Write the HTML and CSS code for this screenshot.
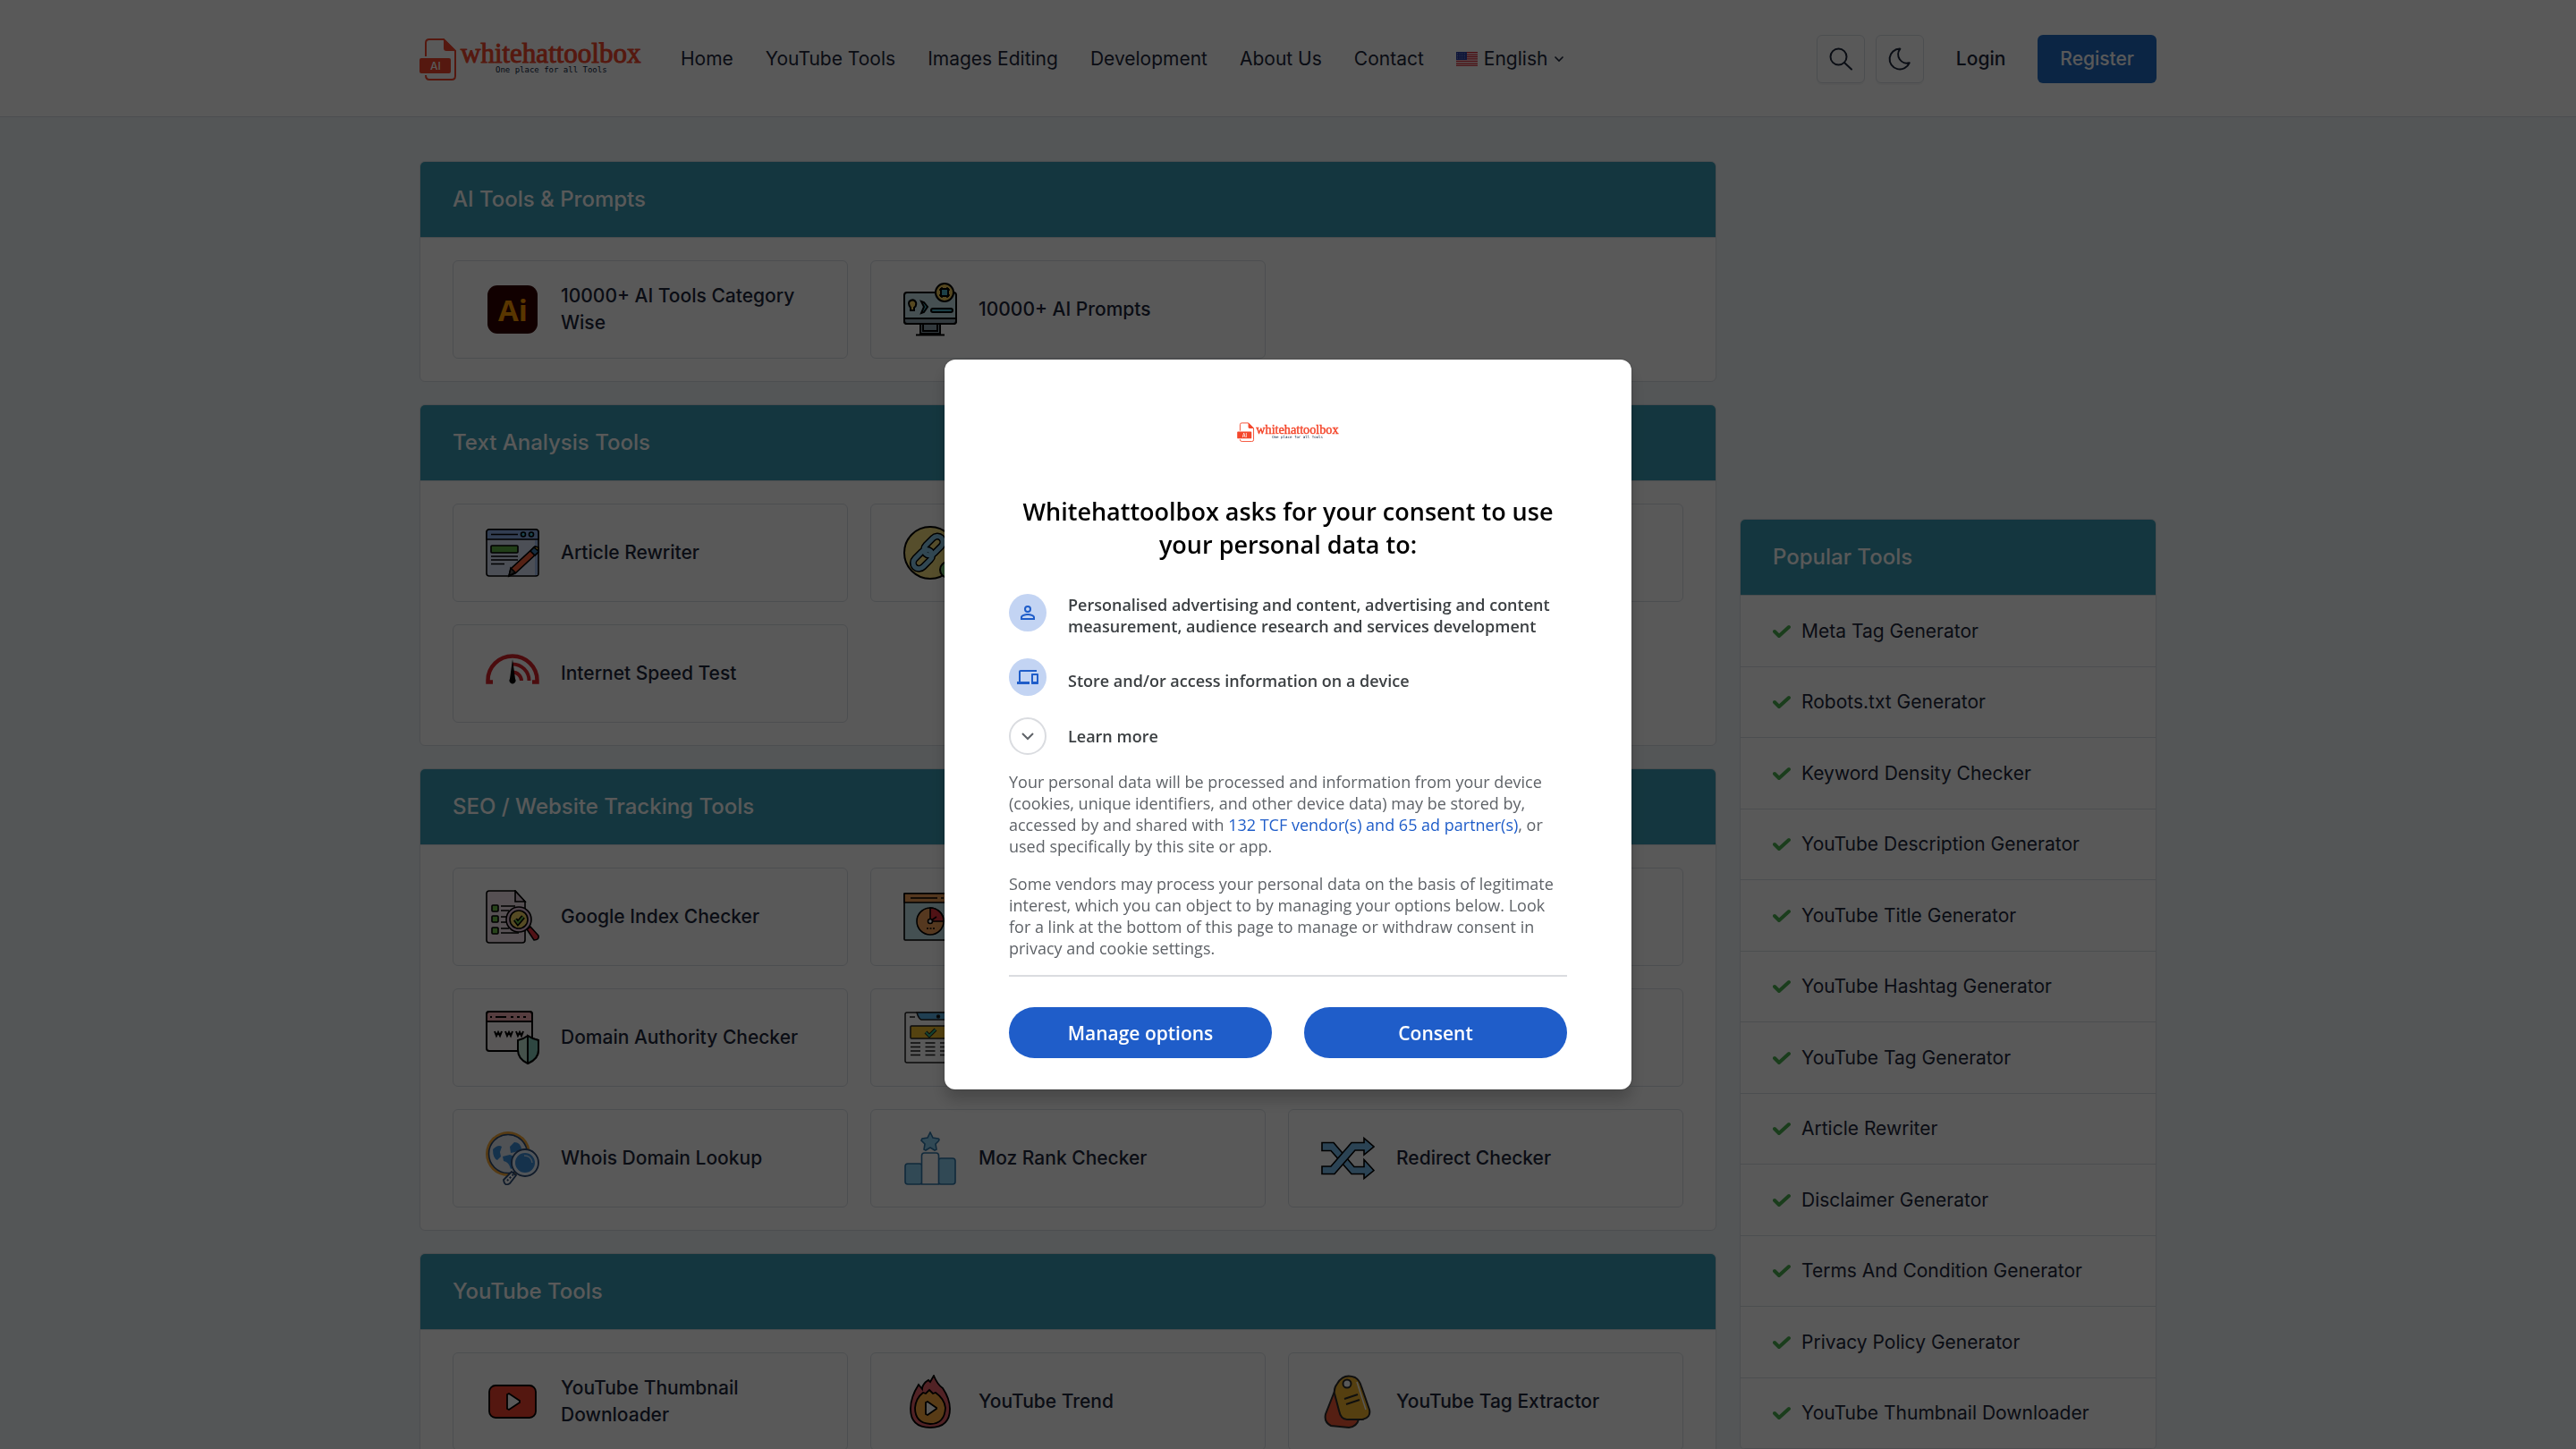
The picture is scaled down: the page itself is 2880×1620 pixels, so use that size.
FILE: index.html
```html
<!DOCTYPE html>
<html lang="en">
<head>
<meta charset="utf-8">
<title>Whitehattoolbox - One place for all Tools</title>
<link rel="stylesheet" href="styles.css">
</head>
<body>
<svg class="sprite" aria-hidden="true">
  <symbol id="logo" viewBox="0 0 250 48">
    <path d="M7 21V6q0-4 4-4h16l13 13v28q0 4-4 4H11q-4 0-4-5" fill="none" stroke="#f4472c" stroke-width="2"/>
    <path d="M27 1l14 14H30q-3 0-3-3z" fill="#f4472c"/>
    <rect x="0" y="23" width="35" height="17" rx="2" fill="#f4472c"/>
    <text x="12" y="36" class="logo-ai">AI</text>
    <text x="46" y="28" class="logo-name">whitehattoolbox</text>
    <text x="85" y="39" class="logo-tag">One place for all Tools</text>
  </symbol>
  <symbol id="tick" viewBox="0 0 20 16">
    <path d="M2 8l5 5L18 3" fill="none" stroke="#4caf50" stroke-width="4" stroke-linecap="round" stroke-linejoin="round"/>
  </symbol>
</svg>

<header class="topbar">
  <div class="container topbar-row">
    <a class="brand" href="#" aria-label="whitehattoolbox"><svg class="brand-logo"><use href="#logo"/></svg></a>
    <nav class="menu">
      <a href="#">Home</a>
      <a href="#">YouTube Tools</a>
      <a href="#">Images Editing</a>
      <a href="#">Development</a>
      <a href="#">About Us</a>
      <a href="#">Contact</a>
      <a href="#" class="language">
        <svg width="24" height="16" viewBox="0 0 24 16"><path fill="#fff" d="M0 0h24v16H0z"/><path stroke="#d8222f" stroke-width="1.3" d="M0 .7h24M0 3.1h24M0 5.5h24M0 7.9h24M0 10.3h24M0 12.8h24M0 15.2h24"/><path fill="#2e42a5" d="M0 0h12v9H0z"/><path stroke="#9aa5dd" stroke-dasharray="1 1.6" d="M1 2h10M1 4.500h10M1 7h10"/></svg>
        English
        <svg width="12" height="8" viewBox="0 0 12 8"><path d="M1.500 1.500 6 6l4.500-4.500" fill="none" stroke="#1d273b" stroke-width="1.600"/></svg>
      </a>
    </nav>
    <div class="actions">
      <button class="icon-button" type="button" aria-label="Search"><svg width="28" height="28" viewBox="0 0 28 28"><g fill="none" stroke="#1d273b" stroke-width="2" stroke-linecap="round"><circle cx="11.500" cy="11.500" r="9"/><path d="m18 18 8 7.500"/></g></svg></button>
      <button class="icon-button" type="button" aria-label="Dark mode"><svg width="28" height="28" viewBox="0 0 28 28"><path d="M14 2.500c-1.300 0 0 0 .4.100a9.800 9.800 0 0 0 10.400 15.600A11.500 11.500 0 1 1 14 2.500z" fill="none" stroke="#1d273b" stroke-width="2" stroke-linejoin="round"/></svg></button>
      <a class="login" href="#">Login</a>
      <a class="register" href="#">Register</a>
    </div>
  </div>
</header>

<main class="container layout">
  <div class="sections">
    <section class="card">
      <h2 class="card-title">AI Tools &amp; Prompts</h2>
      <div class="tools">
        <a class="tool" href="#">
          <svg class="tool-icon" viewBox="0 0 60 60"><rect x="2" y="3" width="56" height="54" rx="11" fill="#330000"/><text x="14" y="43" class="ai-badge">Ai</text></svg>
          <span>10000+ AI Tools Category Wise</span>
        </a>
        <a class="tool" href="#">
          <svg class="tool-icon" viewBox="0 0 60 60" stroke="#000" stroke-width="2"><path d="M19 45h22v12H19z" fill="#8fa3b0"/><path d="M14 58.500h32M22 45v9h16v-9" fill="none"/><rect x="1" y="11" width="58" height="35" rx="3" fill="#c8e4ea"/><path d="M1 40h58v3q0 3-3 3H4q-3 0-3-3z" fill="#8fa3b0"/><path d="M8 31v-3q-4-6 0-8 4-2 6 2 1 4-2 6v3z" fill="#f5cf5c"/><path d="m20 21 3 1 4 5-4 6-3 1 3-7z" fill="#4fb4c8"/><rect x="31" y="29" width="24" height="4" rx="2" fill="#4fb4c8"/><circle cx="46" cy="11" r="10" fill="#f5cf5c"/><path d="M40 8h12M40 14h12M43 5v12M49 5v12" stroke-width="1.500"/><rect x="42" y="7" width="8" height="8" fill="#4fb4c8"/></svg>
          <span>10000+ AI Prompts</span>
        </a>
      </div>
    </section>

    <section class="card">
      <h2 class="card-title">Text Analysis Tools</h2>
      <div class="tools">
        <a class="tool" href="#">
          <svg class="tool-icon" viewBox="0 0 60 60" stroke="#000" stroke-width="1.600"><rect x="1" y="4" width="58" height="52" rx="3" fill="#d9e2f7"/><path d="M1 15V7q0-3 3-3h52q3 0 3 3v8z" fill="#8fb2ea"/><path d="M55 16h3v39h-3z" fill="#a9c4f0" stroke="none"/><path d="M6 9.500h30M6 34h30M6 38h30M6 42.500h15" fill="none"/><circle cx="42" cy="9.500" r="2.500" fill="#4ec3e0"/><circle cx="51" cy="9.500" r="2.500" fill="#4ec3e0"/><rect x="6" y="22" width="30" height="8" rx="1" fill="#5fb246"/><path d="m54 24 5 2v3L33 53l-7 3 2-8z" fill="#f2603a"/><path d="m28 47 5 5-7 4z" fill="#555"/><path d="m50 28 5 5 4-4v-3l-4-3z" fill="#3d7fb5"/><path d="m54 24 2-1 3 1v4z" fill="#f5c842"/></svg>
          <span>Article Rewriter</span>
        </a>
        <a class="tool" href="#" aria-label="Text tool">
          <svg class="tool-icon" viewBox="0 0 60 60" fill="none"><circle cx="30" cy="30" r="29" fill="#f5e07e" stroke="#000" stroke-width="2"/><g transform="rotate(-45 28 30)" stroke="#000" stroke-width="8"><rect x="6" y="24" width="25" height="13" rx="7"/><rect x="25" y="22" width="25" height="13" rx="7"/><g stroke="#8ccbea" stroke-width="5"><rect x="6" y="24" width="25" height="13" rx="7"/><rect x="25" y="22" width="25" height="13" rx="7"/></g></g><circle cx="50" cy="49" r="9" fill="#7bd17b" stroke="#000" stroke-width="2"/></svg>
        </a>
        <a class="tool" href="#" aria-label="Text tool"></a>
        <a class="tool" href="#">
          <svg class="tool-icon" viewBox="0 0 60 60" fill="none" stroke="#d8232a"><path d="M8 39.500H2.500v-2a27.500 27 0 0 1 55 0v2H52" stroke-width="4.500"/><path d="M30 19.500a18.500 18.500 0 0 1 18.500 18.500M30 28.500a10 10 0 0 1 10 9.500" stroke-width="4"/><path d="M30 14l-3 22a3.500 3.500 0 1 0 6 0z" fill="#000" stroke="none"/></svg>
          <span>Internet Speed Test</span>
        </a>
      </div>
    </section>

    <section class="card">
      <h2 class="card-title">SEO / Website Tracking Tools</h2>
      <div class="tools">
        <a class="tool" href="#">
          <svg class="tool-icon" viewBox="0 0 60 60" stroke="#000" stroke-width="1.600"><path d="M4 1h29l11 12v43q0 3-3 3H4q-3 0-3-3V4q0-3 3-3z" fill="#f6e6ee"/><path d="M33 1v12h11z" fill="#e0c9d6"/><g fill="#6fbf4a"><rect x="7" y="17" width="7" height="7" rx="1"/><rect x="7" y="29" width="7" height="7" rx="1"/><rect x="7" y="42" width="7" height="7" rx="1"/></g><path d="M17 18h16M17 23h9M17 30h6M17 36h6M17 43h9M17 48h20"/><path d="m46 44 4-3 9 10q1 5-5 5z" fill="#e8343f"/><circle cx="37" cy="33" r="14" fill="#e6c3da"/><circle cx="37" cy="33" r="10" fill="#f7d768"/><path d="m33 33 3 4 6-7" fill="none" stroke-width="5"/><path d="m33 33 3 4 6-7" fill="none" stroke="#6fbf4a" stroke-width="2"/></svg>
          <span>Google Index Checker</span>
        </a>
        <a class="tool" href="#" aria-label="Website tool">
          <svg class="tool-icon" viewBox="0 0 60 60" stroke="#000" stroke-width="1.600"><rect x="1" y="4" width="58" height="52" rx="1" fill="#c4e6ec"/><path d="M1 4h58v10H1z" fill="#f4a25a"/><path d="M8 9h30M42 9h3"/><circle cx="30" cy="35" r="15" fill="#f4a25a"/><path d="M30 35V20a15 15 0 0 1 15 15z" fill="#e8343f"/><path d="m30 35 7-5"/><circle cx="30" cy="35" r="2.500" fill="#fff"/><path d="M26 43h9" stroke-dasharray="2 1.500"/></svg>
        </a>
        <a class="tool" href="#" aria-label="Website tool"></a>
        <a class="tool" href="#">
          <svg class="tool-icon" viewBox="0 0 60 60" stroke="#000" stroke-width="2"><rect x="1" y="1" width="51" height="44" rx="3" fill="#fff8f8"/><path d="M1 12V4q0-3 3-3h45q3 0 3 3v8z" fill="#f5aeb4"/><path d="M5 7h2M11 7h12M28 7h3M35 7h3M42 7h3"/><path d="m10 23 2 5 2-4 2 4 2-5M22 23l2 5 2-4 2 4 2-5M34 23l2 5 2-4 2 4 2-5" fill="none"/><path d="M47 28q6 4 12 5v11q0 10-12 15-11-5-11-15V33q6-1 11-5z" fill="#c5ead8"/><path d="M47 28q6 4 12 5v11q0 10-12 15z" fill="#83cbb9"/></svg>
          <span>Domain Authority Checker</span>
        </a>
        <a class="tool" href="#" aria-label="Website tool">
          <svg class="tool-icon" viewBox="0 0 60 60" stroke="#222" stroke-width="1.500"><rect x="2" y="2" width="56" height="56" rx="2" fill="#fff"/><path d="M15 2h43v8H20q-3-1-5-8z" fill="#5db5ea"/><circle cx="39" cy="6.500" r="1.500"/><path d="M7 7h6"/><rect x="8" y="17" width="44" height="14" rx="1" fill="#f3bf2e"/><path d="m25 24 4 4 7-7" fill="none" stroke-width="4"/><path d="m25 24 4 4 7-7" fill="none" stroke="#3cc08c" stroke-width="2"/><path d="M8 36h44M8 40.500h44M8 45h44M8 49.500h44" stroke-dasharray="11 5.500"/></svg>
        </a>
        <a class="tool" href="#" aria-label="Website tool"></a>
        <a class="tool" href="#">
          <svg class="tool-icon" viewBox="0 0 60 60"><circle cx="25" cy="25" r="25" fill="#f5a93b"/><circle cx="25" cy="25" r="21.500" fill="#e6ecf4" stroke="#2b4a75" stroke-width="1.600"/><path d="M8 20q6-6 10-3l-2 6 1 5-4 4q-5-2-5-12zM27 17l5-5q7 0 8 8l-7 3-5 1zM19 28l8-2 8 3-2 10-5 3q-2-8-8-9z" fill="#3d8fdb"/><circle cx="44" cy="35" r="15" fill="#e9f4ff" stroke="#2b4a75" stroke-width="1.800"/><circle cx="44" cy="35" r="11" fill="#3d8fdb"/><path d="M43 27q8 0 9 8" fill="none" stroke="#bcdcf7" stroke-width="1.500"/><path d="m29 45 5 4-7 9q-6 4-7-4z" fill="#fff" stroke="#2b4a75" stroke-width="1.800"/><path d="m31 48-7 7" stroke="#2b4a75" stroke-width="2" stroke-dasharray="2 2"/></svg>
          <span>Whois Domain Lookup</span>
        </a>
        <a class="tool" href="#">
          <svg class="tool-icon" viewBox="0 0 60 60" fill="#8ed1f2" stroke="#2f76a8" stroke-width="1.600"><path d="m30 1 3 6 6 1q2 1 0 3l-3 3 1 6-2 1-5-3-5 3-2-1 1-6-4-4 1-2 6-1z"/><rect x="2" y="36" width="19" height="23" rx="3"/><rect x="39" y="30" width="19" height="29" rx="3"/><path d="M20.500 59V27q0-3 3-3h13q3 0 3 3v32z" fill="#fff"/></svg>
          <span>Moz Rank Checker</span>
        </a>
        <a class="tool" href="#">
          <svg class="tool-icon" viewBox="0 0 60 60" fill="#7cc0ef" stroke="#000" stroke-width="1.600"><path d="M1 12.500h13l23 27h11v-8l11 12-11 9v-5H34l-23-26H1z"/><path d="M1 39h10l23-26.500h14v-5L59 17 48 26v-5h-10L15 47.500H1z"/></svg>
          <span>Redirect Checker</span>
        </a>
      </div>
    </section>

    <section class="card">
      <h2 class="card-title">YouTube Tools</h2>
      <div class="tools">
        <a class="tool" href="#">
          <svg class="tool-icon" viewBox="0 0 60 60" stroke="#000" stroke-width="1.800"><rect x="4" y="12" width="52" height="36" rx="7" fill="#f0432f"/><path d="M24 22v16l2 1 12-8v-2l-12-8z" fill="#fff"/></svg>
          <span>YouTube Thumbnail Downloader</span>
        </a>
        <a class="tool" href="#">
          <svg class="tool-icon" viewBox="0 0 60 60" stroke="#000" stroke-width="1.800"><path d="M34 1q4 10 10 14 8 12 8 23 0 21-22 21T8 38q0-13 9-27l4 5q0-4 4-8l3-2 2 2z" fill="#e8616a"/><path d="M29 17l4 4 3-1q10 7 11 17-1 18-17 18-17-1-17-18 1-11 9-17l3 1z" fill="#fba93f"/><path d="M25 31v13l2 1 10-7v-1l-10-7z" fill="#fff"/></svg>
          <span>YouTube Trend</span>
        </a>
        <a class="tool" href="#">
          <svg class="tool-icon" viewBox="0 0 60 60" stroke="#2b2b2b" stroke-width="2"><path d="M16 16 5 44q-2 9 6 13l20 2q9-1 11-9V20z" fill="#f25a38"/><path d="M18 10q7-12 20-7 5 3 7 10l9 26q2 9-8 11l-17 0q-7 0-9-10l-5-19q-1-6 3-11z" fill="#f4b52f"/><path d="m40 8 10 31" stroke="#fff" stroke-width="1.500"/><circle cx="29" cy="10" r="4.500" fill="#fff"/><path d="m26 27 15-5M28 33l15-5"/></svg>
          <span>YouTube Tag Extractor</span>
        </a>
      </div>
    </section>
  </div>

  <aside class="sidebar">
    <div class="ad-slot"></div>
    <section class="card">
      <h2 class="card-title">Popular Tools</h2>
      <ul class="popular">
        <li><a href="#"><svg class="tick"><use href="#tick"/></svg>Meta Tag Generator</a></li>
        <li><a href="#"><svg class="tick"><use href="#tick"/></svg>Robots.txt Generator</a></li>
        <li><a href="#"><svg class="tick"><use href="#tick"/></svg>Keyword Density Checker</a></li>
        <li><a href="#"><svg class="tick"><use href="#tick"/></svg>YouTube Description Generator</a></li>
        <li><a href="#"><svg class="tick"><use href="#tick"/></svg>YouTube Title Generator</a></li>
        <li><a href="#"><svg class="tick"><use href="#tick"/></svg>YouTube Hashtag Generator</a></li>
        <li><a href="#"><svg class="tick"><use href="#tick"/></svg>YouTube Tag Generator</a></li>
        <li><a href="#"><svg class="tick"><use href="#tick"/></svg>Article Rewriter</a></li>
        <li><a href="#"><svg class="tick"><use href="#tick"/></svg>Disclaimer Generator</a></li>
        <li><a href="#"><svg class="tick"><use href="#tick"/></svg>Terms And Condition Generator</a></li>
        <li><a href="#"><svg class="tick"><use href="#tick"/></svg>Privacy Policy Generator</a></li>
        <li><a href="#"><svg class="tick"><use href="#tick"/></svg>YouTube Thumbnail Downloader</a></li>
      </ul>
    </section>
  </aside>
</main>

<div class="overlay">
  <div class="consent" role="dialog" aria-modal="true" aria-labelledby="consent-title">
    <svg class="consent-logo"><use href="#logo"/></svg>
    <h1 id="consent-title">Whitehattoolbox asks for your consent to use your personal data to:</h1>
    <ul class="purposes">
      <li>
        <span class="badge"><svg width="24" height="24" viewBox="0 0 24 24"><path fill="#1f5dc9" d="M12 12a4 4 0 1 0 0-8 4 4 0 0 0 0 8zm0-6a2 2 0 1 1 0 4 2 2 0 0 1 0-4zm0 7c-2.700 0-8 1.300-8 4v3h16v-3c0-2.700-5.300-4-8-4zm6 5H6v-1c0-.6 3.100-2 6-2s6 1.400 6 2z"/></svg></span>
        <span class="purpose">Personalised advertising and content, advertising and content measurement, audience research and services development</span>
      </li>
      <li>
        <span class="badge"><svg width="24" height="24" viewBox="0 0 24 24"><path fill="#1f5dc9" d="M4 6h18V4H4c-1.100 0-2 .9-2 2v11H0v3h14v-3H4zm19 2h-6c-.6 0-1 .4-1 1v10c0 .6.4 1 1 1h6c.6 0 1-.4 1-1V9c0-.6-.4-1-1-1zm-1 9h-4v-7h4z"/></svg></span>
        <span class="purpose single">Store and/or access information on a device</span>
      </li>
    </ul>
    <button class="learn" type="button">
      <span class="badge outline"><svg width="14" height="10" viewBox="0 0 14 10"><path d="m1 2 6 6 6-6" fill="none" stroke="#5f6368" stroke-width="2"/></svg></span>
      Learn more
    </button>
    <p>Your personal data will be processed and information from your device (cookies, unique identifiers, and other device data) may be stored by, accessed by and shared with <a href="#">132 TCF vendor(s) and 65 ad partner(s)</a>, or used specifically by this site or app.</p>
    <p>Some vendors may process your personal data on the basis of legitimate interest, which you can object to by managing your options below. Look for a link at the bottom of this page to manage or withdraw consent in privacy and cookie settings.</p>
    <div class="choices">
      <button type="button">Manage options</button>
      <button type="button">Consent</button>
    </div>
  </div>
</div>
</body>
</html>
```
FILE: styles.css
```css
* {
  box-sizing: border-box;
}

html,
body {
  height: 100%;
  margin: 0;
  overflow: hidden;
}

body {
  background: #f1f5f9;
  color: #1d273b;
  font: 400 21px/30px Inter, sans-serif;
}

a {
  color: inherit;
  text-decoration: none;
}

h1,
h2,
p,
ul {
  margin: 0;
  padding: 0;
}

ul {
  list-style: none;
}

button {
  font: inherit;
  color: inherit;
  padding: 0;
  cursor: pointer;
}

svg {
  display: block;
  flex: none;
}

.sprite {
  display: none;
}

.container {
  width: 100%;
  max-width: 1942px;
  margin: 0 auto;
}

/* Logo */
.logo-ai {
  font: 500 12px Inter, sans-serif;
  fill: #fff;
}

.logo-name {
  font: 400 31px "Liberation Serif", serif;
  fill: #f4472c;
  stroke: #f4472c;
  stroke-width: 1px;
}

.logo-tag {
  font: 400 9px "DejaVu Sans Mono", monospace;
  fill: #0b2340;
}

/* Top bar */
.topbar {
  padding-top: 2px;
  background: #fff;
  border-bottom: 1px solid #dadfe5;
}

.topbar-row {
  display: flex;
  align-items: center;
  height: 128px;
}

.brand-logo {
  width: 250px;
  height: 48px;
}

.menu {
  display: flex;
  gap: 36px;
  margin-left: 42px;
}

.language {
  display: flex;
  align-items: center;
  gap: 7px;
}

.actions {
  display: flex;
  align-items: center;
  gap: 12px;
  margin-left: auto;
  font-weight: 500;
}

.icon-button {
  display: grid;
  place-items: center;
  width: 54px;
  height: 54px;
  background: #fff;
  border: 1px solid #dadfe5;
  border-radius: 6px;
  box-shadow: 0 2px 0 rgba(29, 39, 59, .04);
}

.login {
  padding: 0 24px;
}

.register {
  padding: 12px 25px;
  background: #206bc4;
  border-radius: 6px;
  color: #fff;
}

/* Page */
.layout {
  display: grid;
  grid-template-columns: 1450fr 466fr;
  gap: 26px;
  align-items: start;
  padding-top: 49px;
}

.sections {
  display: grid;
  gap: 25px;
}

.card {
  background: #fff;
  border: 1px solid #dadfe5;
  border-radius: 6px;
  overflow: hidden;
}

.card-title {
  padding: 27px 36px;
  background: #3a9cb4;
  border-bottom: 1px solid #dadfe5;
  color: #fff;
  font-size: 24px;
  font-weight: 500;
  line-height: 30px;
}

.tools {
  display: grid;
  grid-template-columns: repeat(3, 1fr);
  gap: 25px;
  padding: 25px 36px;
}

.tool {
  display: flex;
  align-items: center;
  gap: 24px;
  min-height: 110px;
  padding: 0 36px;
  border: 1px solid #dadfe5;
  border-radius: 6px;
  font-weight: 500;
}

.tool-icon {
  width: 60px;
  height: 60px;
}

.ai-badge {
  font: 700 33px "Open Sans", sans-serif;
  fill: #ff9a00;
}

/* Sidebar */
.ad-slot {
  height: 400px;
}

.popular li {
  padding: 24px 36px;
  border-bottom: 1px solid #dadfe5;
}

.popular li:nth-child(odd) {
  padding-top: 25px;
}

.popular a {
  display: flex;
  align-items: center;
  gap: 12px;
}

.tick {
  width: 20px;
  height: 16px;
}

/* Consent dialog */
.overlay {
  position: fixed;
  inset: 0;
  display: grid;
  place-items: center;
  background: rgba(0, 0, 0, .65);
}

.consent {
  width: 768px;
  padding: 70px 72px 35px;
  background: #fff;
  border-radius: 12px;
  box-shadow: 0 12px 18px rgba(0, 0, 0, .2), 0 0 2px rgba(0, 0, 0, .4);
  color: #5f6368;
  font: 400 18px/24px "Open Sans", sans-serif;
}

.consent-logo {
  width: 115px;
  height: 22px;
  margin: 0 auto;
}

.consent h1 {
  margin-top: 59px;
  color: #000;
  font-size: 27px;
  font-weight: 600;
  line-height: 37px;
  text-align: center;
}

.purposes {
  display: grid;
  gap: 24px;
  margin-top: 37px;
}

.purposes li,
.learn {
  display: flex;
  gap: 24px;
  color: #3c4043;
  font-weight: 600;
}

.badge {
  display: grid;
  place-items: center;
  flex: none;
  width: 42px;
  height: 42px;
  border-radius: 50%;
  background: #c3d4f3;
}

.outline {
  background: #fff;
  border: 2px solid #dadce0;
}

.single {
  padding-top: 13px;
}

.learn {
  align-items: center;
  margin: 24px 0 18px;
  border: 0;
  background: none;
}

.consent p {
  margin-bottom: 18px;
}

.consent p a {
  color: #1f5dc9;
  font-weight: 500;
}

.choices {
  display: grid;
  grid-template-columns: 1fr 1fr;
  gap: 36px;
  padding-top: 34px;
  border-top: 2px solid #dadce0;
}

.choices button {
  height: 57px;
  border: 0;
  border-radius: 29px;
  background: #1f5dc9;
  color: #fff;
  font-size: 21px;
  font-weight: 600;
}
```
